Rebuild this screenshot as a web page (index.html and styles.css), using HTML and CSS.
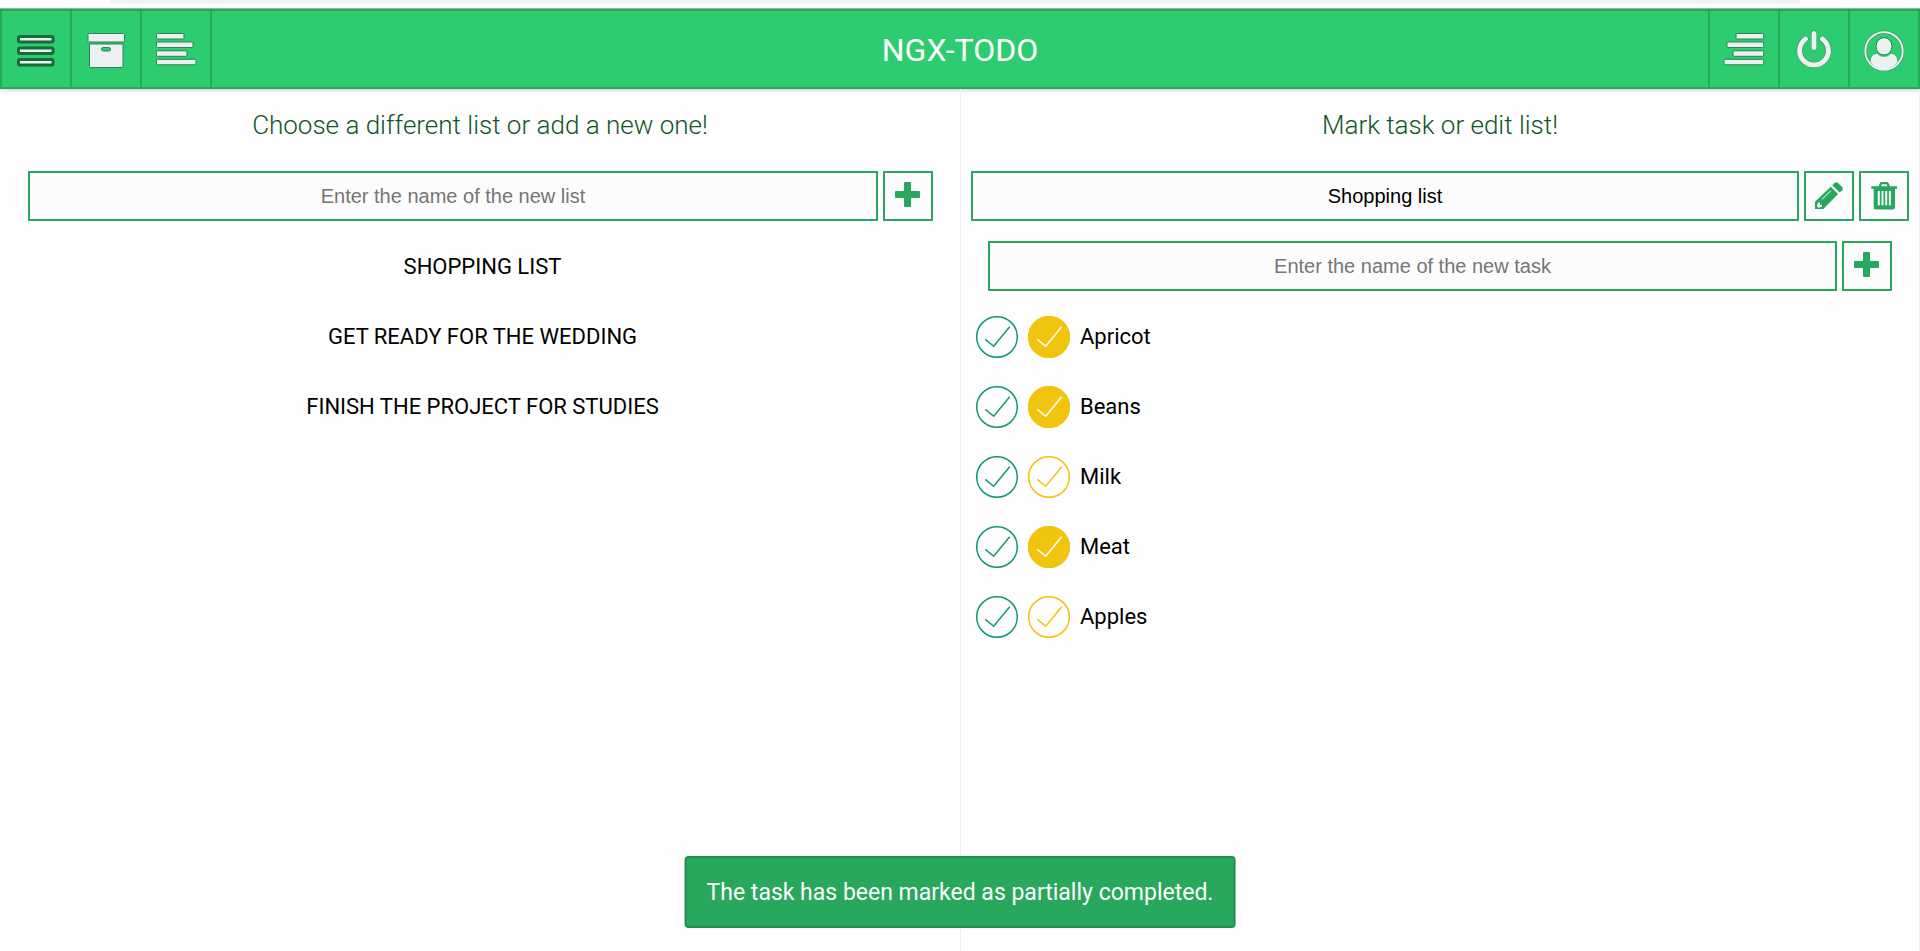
FILE: index.html
```html
<!DOCTYPE html>
<html lang="en">
<head>
<meta charset="utf-8">
<title>NGX-TODO</title>
<link rel="stylesheet" href="styles.css">
</head>
<body>
<svg class="sprite" aria-hidden="true">
  <symbol id="plus" viewBox="0 0 46 46">
    <rect x="19" y="9" width="7" height="25" rx="1"/>
    <rect x="10" y="18" width="25" height="7" rx="1"/>
  </symbol>
  <symbol id="check" viewBox="0 0 42 42">
    <circle class="ring-line" cx="21" cy="21" r="20.3"/>
    <path d="M9.3 23.3 17.7 30.3 33.7 10.7"/>
  </symbol>
</svg>
<div class="browser-edge"><div class="address-bar"></div></div>
<header class="topbar">
  <nav class="group">
    <button class="tool" aria-label="Menu"><svg viewBox="2 11 68 76"><g class="dark"><rect x="18.5" y="36.5" width="34.5" height="5.5" rx="1.5"/><rect x="18.5" y="48" width="34.5" height="5.5" rx="1.5"/><rect x="18.5" y="59.5" width="34.5" height="5.5" rx="1.5"/></g></svg></button>
    <button class="tool" aria-label="Archive"><svg viewBox="72 11 68 76"><rect x="88" y="33.5" width="36.5" height="8.5" rx="1"/><path d="M89.5 44H123V66.5Q123 67.5 122 67.5H90.5Q89.5 67.5 89.5 66.5Z"/><rect class="slot" x="101.5" y="47.5" width="9" height="3.5" rx="1.7"/></svg></button>
    <button class="tool" aria-label="Lists"><svg viewBox="142 11 68 76"><rect x="156.5" y="33.5" width="27.5" height="5.5" rx="1"/><rect x="156.5" y="42" width="36.5" height="5.5" rx="1"/><rect x="156.5" y="50.8" width="30.5" height="5.5" rx="1"/><rect x="156.5" y="59.3" width="39.5" height="5.5" rx="1"/></svg></button>
  </nav>
  <h1 class="brand">NGX-TODO</h1>
  <nav class="group group-end">
    <button class="tool" aria-label="Tasks"><svg viewBox="1710 11 68 76"><rect x="1736" y="33.5" width="27.7" height="5.5" rx="1"/><rect x="1727" y="42" width="36.7" height="5.5" rx="1"/><rect x="1733" y="50.8" width="30.7" height="5.5" rx="1"/><rect x="1724" y="59.3" width="39.7" height="5.5" rx="1"/></svg></button>
    <button class="tool" aria-label="Log out"><svg viewBox="1780 11 68 76"><g class="power-edge"><path d="M1805.5 39A14.4 14.4 0 1 0 1822.5 39"/><path d="M1814 33.5V47.5"/></g><g class="power"><path d="M1805.5 39A14.4 14.4 0 1 0 1822.5 39"/><path d="M1814 33.5V47.5"/></g></svg></button>
    <button class="tool" aria-label="Account"><svg viewBox="1850 11 68 76"><circle class="ring-edge" cx="1884" cy="51" r="18.7"/><circle class="ring" cx="1884" cy="51" r="18.7"/><ellipse cx="1884" cy="46.3" rx="8" ry="8.7"/><path class="bust" d="M1870.5 62C1871 56.5 1873 54 1877.5 54C1881 57.8 1887 57.8 1890.5 54C1895 54 1897 56.5 1897.5 62C1890 72.5 1878 72.5 1870.5 62Z"/></svg></button>
  </nav>
</header>
<main class="columns">
  <section class="column">
    <h2 class="heading">Choose a different list or add a new one!</h2>
    <form class="row inset">
      <input class="field" type="text" placeholder="Enter the name of the new list" aria-label="New list name">
      <button class="action" type="button" aria-label="Add list"><svg><use href="#plus"/></svg></button>
    </form>
    <ul class="lists">
      <li><button class="list-name">SHOPPING LIST</button></li>
      <li><button class="list-name">GET READY FOR THE WEDDING</button></li>
      <li><button class="list-name">FINISH THE PROJECT FOR STUDIES</button></li>
    </ul>
  </section>
  <section class="column details">
    <h2 class="heading">Mark task or edit list!</h2>
    <form class="row">
      <input class="field" type="text" value="Shopping list" aria-label="List name">
      <button class="action" type="button" aria-label="Rename list"><svg viewBox="0 0 46 46"><path d="M28.8 9.8Q30.3 8.5 31.8 9.8L36.3 14.2Q37.5 15.7 36.3 17.2L33.7 19.6 26.2 12.2Z"/><path fill-rule="evenodd" d="M24.7 13.7 32.1 20.9 17.3 36H9V28.7ZM12 29.5 11 33.2 12.7 34.8 16 33.8V31.7H14V29.5Z"/><path class="cut" d="M15.8 26.5 25 17.7"/></svg></button>
      <button class="action" type="button" aria-label="Delete list"><svg viewBox="0 0 46 46"><path d="M10.3 13.3H17.5L19 10Q19.4 9 20.5 9H26Q27.1 9 27.5 10L29 13.3H36V15.8H34V34Q34 36.5 31.5 36.5H15.2Q12.7 36.5 12.7 34V15.8H10.3ZM20 13.3H26.5L25.7 11.3H20.8Z" fill-rule="evenodd"/><path class="cut wide" d="M17.8 18V32.3M21.5 18V32.3M25.2 18V32.3M28.9 18V32.3"/></svg></button>
    </form>
    <form class="row inset new-task">
      <input class="field" type="text" placeholder="Enter the name of the new task" aria-label="New task name">
      <button class="action" type="button" aria-label="Add task"><svg><use href="#plus"/></svg></button>
    </form>
    <ul class="tasks">
      <li class="task"><button class="mark" aria-label="Complete"><svg><use href="#check"/></svg></button><button class="mark partial on" aria-label="Partially complete"><svg><use href="#check"/></svg></button><span>Apricot</span></li>
      <li class="task"><button class="mark" aria-label="Complete"><svg><use href="#check"/></svg></button><button class="mark partial on" aria-label="Partially complete"><svg><use href="#check"/></svg></button><span>Beans</span></li>
      <li class="task"><button class="mark" aria-label="Complete"><svg><use href="#check"/></svg></button><button class="mark partial" aria-label="Partially complete"><svg><use href="#check"/></svg></button><span>Milk</span></li>
      <li class="task"><button class="mark" aria-label="Complete"><svg><use href="#check"/></svg></button><button class="mark partial on" aria-label="Partially complete"><svg><use href="#check"/></svg></button><span>Meat</span></li>
      <li class="task"><button class="mark" aria-label="Complete"><svg><use href="#check"/></svg></button><button class="mark partial" aria-label="Partially complete"><svg><use href="#check"/></svg></button><span>Apples</span></li>
    </ul>
  </section>
</main>
<div class="toast" role="status">The task has been marked as partially completed.</div>
</body>
</html>
```

FILE: styles.css
```css
* { box-sizing: border-box; }
body {
  margin: 0;
  min-height: 100vh;
  display: flex;
  flex-direction: column;
  background: #fefefe;
  color: #000;
  font-family: Roboto, "Liberation Sans", sans-serif;
  font-size: 22px;
}
h1, h2, ul { margin: 0; padding: 0; font-weight: 400; }
ul { list-style: none; }
button { margin: 0; padding: 0; border: 0; background: none; color: inherit; font: inherit; cursor: pointer; }
svg { display: block; }
.sprite { position: absolute; width: 0; height: 0; }

.browser-edge { height: 9px; padding: 0 120px 0 110px; background: #fff; border-bottom: 1px solid #b0b3b3; }
.address-bar { height: 4px; background: #f1f3f4; border-radius: 0 0 12px 12px; }

.topbar {
  height: 80px;
  display: grid;
  grid-template-columns: 1fr auto 1fr;
  align-items: center;
  background: #2ecc71;
  border: 2px solid #27a85c;
  box-shadow: 0 1px 4px rgba(0, 0, 0, 0.2);
}
.group { display: flex; }
.group-end { justify-content: flex-end; }
.tool { width: 70px; height: 76px; border-right: 2px solid #27a85c; }
.group-end .tool { border-right: 0; border-left: 2px solid #27a85c; }
.tool svg { width: 68px; height: 76px; fill: #ecf0f1; stroke: #2c8354; stroke-width: 1px; }
.tool .dark { stroke: #176b38; stroke-width: 3px; }
.tool .slot { fill: #2ecc71; }
.tool .power, .tool .power-edge { fill: none; stroke-linecap: round; }
.tool .power { stroke: #ecf0f1; stroke-width: 5px; }
.tool .power-edge { stroke: #2c8354; stroke-width: 6px; }
.tool .ring, .tool .ring-edge { fill: none; }
.tool .ring { stroke: #ecf0f1; stroke-width: 2px; }
.tool .ring-edge { stroke: #2c8354; stroke-width: 3px; }
.tool .bust { stroke: none; }
.brand { padding-top: 2px; color: #fff; font-size: 32px; line-height: 40px; }

.columns { flex: 1; display: grid; grid-template-columns: 1fr 1fr; }
.column { padding: 0 10px; }
.details { border: 1px solid #f0f0f0; border-width: 0 1px; }
.heading { padding: 20px 0 30px; color: #0f5528; font-size: 26px; font-weight: 300; line-height: 32px; text-align: center; }
.row { display: flex; gap: 5px; }
.inset { padding: 0 17px; }
.column:first-child .inset { padding-left: 18px; }
.new-task { margin-top: 20px; }
.field {
  flex: 1;
  min-width: 0;
  height: 50px;
  padding: 0;
  border: 2px solid #27a85c;
  border-radius: 0;
  background: #fcfcfc;
  color: #000;
  font: 20px "Liberation Sans", Arial, sans-serif;
  text-align: center;
}
.field::placeholder { color: #757575; opacity: 1; }
.action { width: 50px; height: 50px; border: 2px solid #27a85c; background: #fcfcfc; }
.action svg { width: 46px; height: 46px; fill: #27a85c; }
.action .cut { fill: none; stroke: #fcfcfc; stroke-width: 1px; }
.action .wide { stroke-width: 2px; }

.lists { padding: 10px 0 0 5px; }
.list-name { width: 100%; height: 70px; text-align: center; }
.tasks { padding: 10px 0 0 5px; }
.task { height: 70px; display: flex; align-items: center; gap: 10px; }
.mark { width: 42px; height: 42px; margin-top: 2px; stroke: #139a6b; --ring: #139a6b; }
.mark svg { width: 42px; height: 42px; fill: none; stroke-width: 1.5px; }
.partial { stroke: #f1c40f; --ring: #f1c40f; }
.on { border-radius: 50%; background: #f1c40f; stroke: #fff; }
.ring-line { stroke: var(--ring); }

.toast {
  position: fixed;
  bottom: 23px;
  left: 50%;
  transform: translateX(-50%);
  padding: 18px 20px 16px;
  border: 2px solid #208e4e;
  border-radius: 4px;
  background: #27a85c;
  color: #fff;
  font-size: 23px;
  line-height: 34px;
  white-space: nowrap;
}
```
